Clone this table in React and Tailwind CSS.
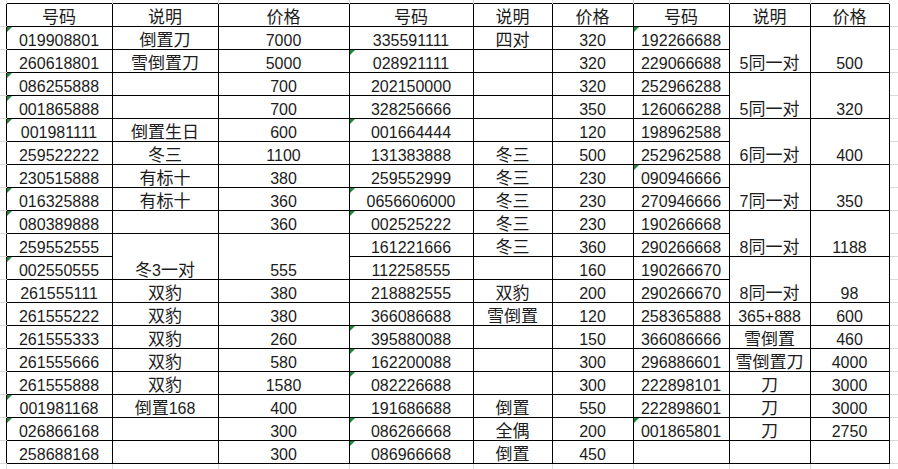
import React from "react";

// 9-column price sheet. "^" prefix = cell has Excel's green "number stored as text" flag.
// [text, n] = merged cell spanning n rows; null = covered by a merge above.
const HEAD = ["号码", "说明", "价格", "号码", "说明", "价格", "号码", "说明", "价格"];

const ROWS = [
  ["^019908801", "倒置刀", "7000", "335591111", "四对", "320", "^192266688", ["5同一对", 2], ["500", 2]],
  ["260618801", "雪倒置刀", "5000", "^028921111", "", "320", "229066688", null, null],
  ["^086255888", "", "700", "202150000", "", "320", "252966288", ["5同一对", 2], ["320", 2]],
  ["^001865888", "", "700", "328256666", "", "350", "126066288", null, null],
  ["^001981111", "倒置生日", "600", "^001664444", "", "120", "198962588", ["6同一对", 2], ["400", 2]],
  ["259522222", "冬三", "1100", "131383888", "冬三", "500", "252962588", null, null],
  ["230515888", "有标十", "380", "259552999", "冬三", "230", "^090946666", ["7同一对", 2], ["350", 2]],
  ["^016325888", "有标十", "360", "^0656606000", "冬三", "230", "270946666", null, null],
  ["^080389888", "", "360", "^002525222", "冬三", "230", "190266668", ["8同一对", 2], ["1188", 2]],
  ["259552555", ["冬3一对", 2], ["555", 2], "161221666", "冬三", "360", "290266668", null, null],
  ["^002550555", null, null, "112258555", "", "160", "190266670", ["8同一对", 2], ["98", 2]],
  ["261555111", "双豹", "380", "218882555", "双豹", "200", "290266670", null, null],
  ["261555222", "双豹", "380", "366086688", "雪倒置", "120", "258365888", "365+888", "600"],
  ["261555333", "双豹", "260", "^395880088", "", "150", "366086666", "雪倒置", "460"],
  ["261555666", "双豹", "580", "^162200088", "", "300", "296886601", "雪倒置刀", "4000"],
  ["261555888", "双豹", "1580", "^082226688", "", "300", "222898101", "刀", "3000"],
  ["^001981168", "倒置168", "400", "191686688", "倒置", "550", "222898601", "刀", "3000"],
  ["^026866168", "", "300", "^086266668", "全偶", "200", "^001865801", "刀", "2750"],
  ["258688168", "", "300", "^086966668", "倒置", "450", "", "", ""],
];

const WIDTHS = [6, 106, 106, 131, 124, 79, 81, 96, 81, 79, 9];

// CJK runs are set a touch larger, like the sheet's default font
function Txt({ s }) {
  const parts = s.split(/([\u3400-\u9fff]+)/);
  return parts.map((p, i) =>
    i % 2 ? (
      <span key={i} className="text-[17px] font-['Noto_Sans_CJK_SC',sans-serif]">
        {p}
      </span>
    ) : (
      p
    )
  );
}

function Flag() {
  return (
    <svg className="absolute left-0 top-0" width="5" height="5">
      <polygon points="0,0 5,0 0,5" fill="#1d8a3a" />
    </svg>
  );
}

function Cell({ v, rs }) {
  const flag = v.startsWith("^");
  const text = flag ? v.slice(1) : v;
  return (
    <td
      rowSpan={rs}
      className="relative border border-black p-0 text-center align-bottom leading-[16px] whitespace-nowrap"
    >
      {flag && <Flag />}
      <Txt s={text} />
    </td>
  );
}

const Gap = () => <td className="border-b border-[#d9d9d9] p-0" />;

export default function App() {
  return (
    <div className="w-[898px] h-[469px] overflow-hidden bg-white text-[16px] text-[#1c1c1c] font-['Liberation_Sans','Noto_Sans_CJK_SC',sans-serif]">
      <table className="w-[898px] table-fixed border-collapse">
        <colgroup>
          {WIDTHS.map((w, i) => (
            <col key={i} style={{ width: w }} />
          ))}
        </colgroup>
        <tbody>
          <tr className="h-[3px]">
            {WIDTHS.map((_, i) => (
              <td key={i} className="border-r border-[#d9d9d9] p-0" />
            ))}
          </tr>
          <tr className="h-[23px]">
            <Gap />
            {HEAD.map((h, i) => (
              <Cell key={i} v={h} />
            ))}
            <Gap />
          </tr>
          {ROWS.map((r, ri) => (
            <tr key={ri} className="h-[23px]">
              <Gap />
              {r.map((c, ci) => {
                if (c === null) return null;
                if (Array.isArray(c)) return <Cell key={ci} v={c[0]} rs={c[1]} />;
                return <Cell key={ci} v={c} />;
              })}
              <Gap />
            </tr>
          ))}
          <tr className="h-[6px]">
            {WIDTHS.map((_, i) => (
              <td key={i} className="border-r border-[#d9d9d9] p-0" />
            ))}
          </tr>
        </tbody>
      </table>
    </div>
  );
}
